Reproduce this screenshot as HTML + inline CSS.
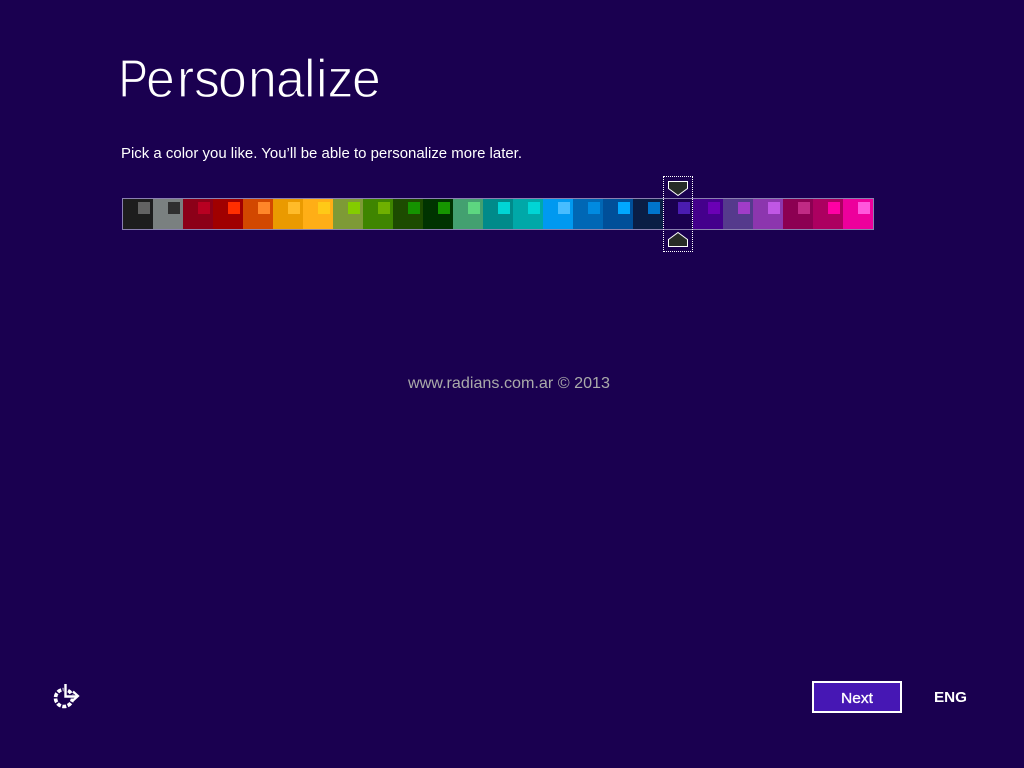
<!DOCTYPE html>
<html lang="en">
<head>
<meta charset="utf-8">
<title>Personalize</title>
<style>
html,body{margin:0;padding:0;width:1024px;height:768px;overflow:hidden;background:#1a0050}
svg{display:block;position:absolute;left:0;top:0}
text{font-family:"Liberation Sans",sans-serif}
#strip{position:absolute;left:122px;top:198px;width:750px;height:30px;border:1px solid #8a80b0;display:flex}
#strip div{width:30px;height:30px;position:relative;flex:none}
#strip i{position:absolute;left:15px;top:3px;width:12px;height:12px;display:block}
#sel{position:absolute;left:663px;top:176px;width:28px;height:74px;border:1px dotted #ffffff}
</style>
</head>
<body>
<svg width="1024" height="768" viewBox="0 0 1024 768" xmlns="http://www.w3.org/2000/svg">
<rect width="1024" height="768" fill="#1a0050"/>
<text transform="scale(.82 1)" x="144.5" y="97" font-size="54" fill="#ffffff" stroke="#1a0050" stroke-width="1.2">P</text>
<text transform="scale(.96 1)" x="152.1 184.4 202.1 227.1 258.3 287.5 316.7 329.2 341.1 366.7" y="97" font-size="54" fill="#ffffff" stroke="#1a0050" stroke-width="1.2">ersonalize</text>
<text x="121" y="158" font-size="14.5" fill="#ffffff" textLength="401" lengthAdjust="spacingAndGlyphs">Pick a color you like. You’ll be able to personalize more later.</text>
<text x="408" y="388" font-size="16" fill="#aaaaaa" textLength="202" lengthAdjust="spacingAndGlyphs">www.radians.com.ar © 2013</text>
<circle cx="64" cy="698" r="8.5" fill="none" stroke="#ffffff" stroke-width="3.6" stroke-dasharray="4 1.5"/>
<path d="M65.5 684V696.5H77" fill="none" stroke="#1a0050" stroke-width="4"/>
<path d="M65.5 684V696.5H77" fill="none" stroke="#ffffff" stroke-width="2.4"/>
<path d="M73 691.5L78 696L73 700.5" fill="none" stroke="#ffffff" stroke-width="2.2"/>
<rect x="813" y="682" width="88" height="30" fill="#4617b4" stroke="#ffffff" stroke-width="2" shape-rendering="crispEdges"/>
<text x="841" y="703" font-size="15" fill="#ffffff" stroke="#ffffff" stroke-width=".3" textLength="32" lengthAdjust="spacingAndGlyphs">Next</text>
<text x="934" y="702" font-size="15" font-weight="bold" fill="#ffffff" textLength="33" lengthAdjust="spacingAndGlyphs">ENG</text>
</svg>
<div id="strip">
<div style="background:#1d1d1d"><i style="background:#626262"></i></div>
<div style="background:#7a8080"><i style="background:#2f2f2f"></i></div>
<div style="background:#8c0018"><i style="background:#b80021"></i></div>
<div style="background:#a00000"><i style="background:#ff2e00"></i></div>
<div style="background:#d24800"><i style="background:#ff8629"></i></div>
<div style="background:#ea9a00"><i style="background:#ffbb29"></i></div>
<div style="background:#ffae16"><i style="background:#ffc917"></i></div>
<div style="background:#7e9a36"><i style="background:#84cc00"></i></div>
<div style="background:#3f8500"><i style="background:#6fb000"></i></div>
<div style="background:#1d4b00"><i style="background:#159300"></i></div>
<div style="background:#003300"><i style="background:#169500"></i></div>
<div style="background:#43a070"><i style="background:#5dd680"></i></div>
<div style="background:#008a8a"><i style="background:#00d5d5"></i></div>
<div style="background:#00a8a8"><i style="background:#00d5d5"></i></div>
<div style="background:#0099f0"><i style="background:#47bdff"></i></div>
<div style="background:#0067b5"><i style="background:#008ae0"></i></div>
<div style="background:#004f99"><i style="background:#00a8ff"></i></div>
<div style="background:#0a1e45"><i style="background:#0075cc"></i></div>
<div style="background:#1a0050"><i style="background:#4a1cb0"></i></div>
<div style="background:#44008c"><i style="background:#6a00b5"></i></div>
<div style="background:#553a8c"><i style="background:#a03cc8"></i></div>
<div style="background:#8c36ae"><i style="background:#c057e5"></i></div>
<div style="background:#8c0052"><i style="background:#c02a84"></i></div>
<div style="background:#ac0060"><i style="background:#ff00a4"></i></div>
<div style="background:#ed009c"><i style="background:#ff57dc"></i></div>
</div>
<div id="sel"></div>
<svg width="1024" height="768" viewBox="0 0 1024 768" xmlns="http://www.w3.org/2000/svg" style="pointer-events:none">
<path d="M668.5 181.5H687.5V188.5L678 195.5L668.5 188.5Z" fill="#262b26" stroke="#ffffff" stroke-width="1"/>
<path d="M668.5 246.5H687.5V239.5L678 232.5L668.5 239.5Z" fill="#262b26" stroke="#ffffff" stroke-width="1"/>
</svg>
</body>
</html>
